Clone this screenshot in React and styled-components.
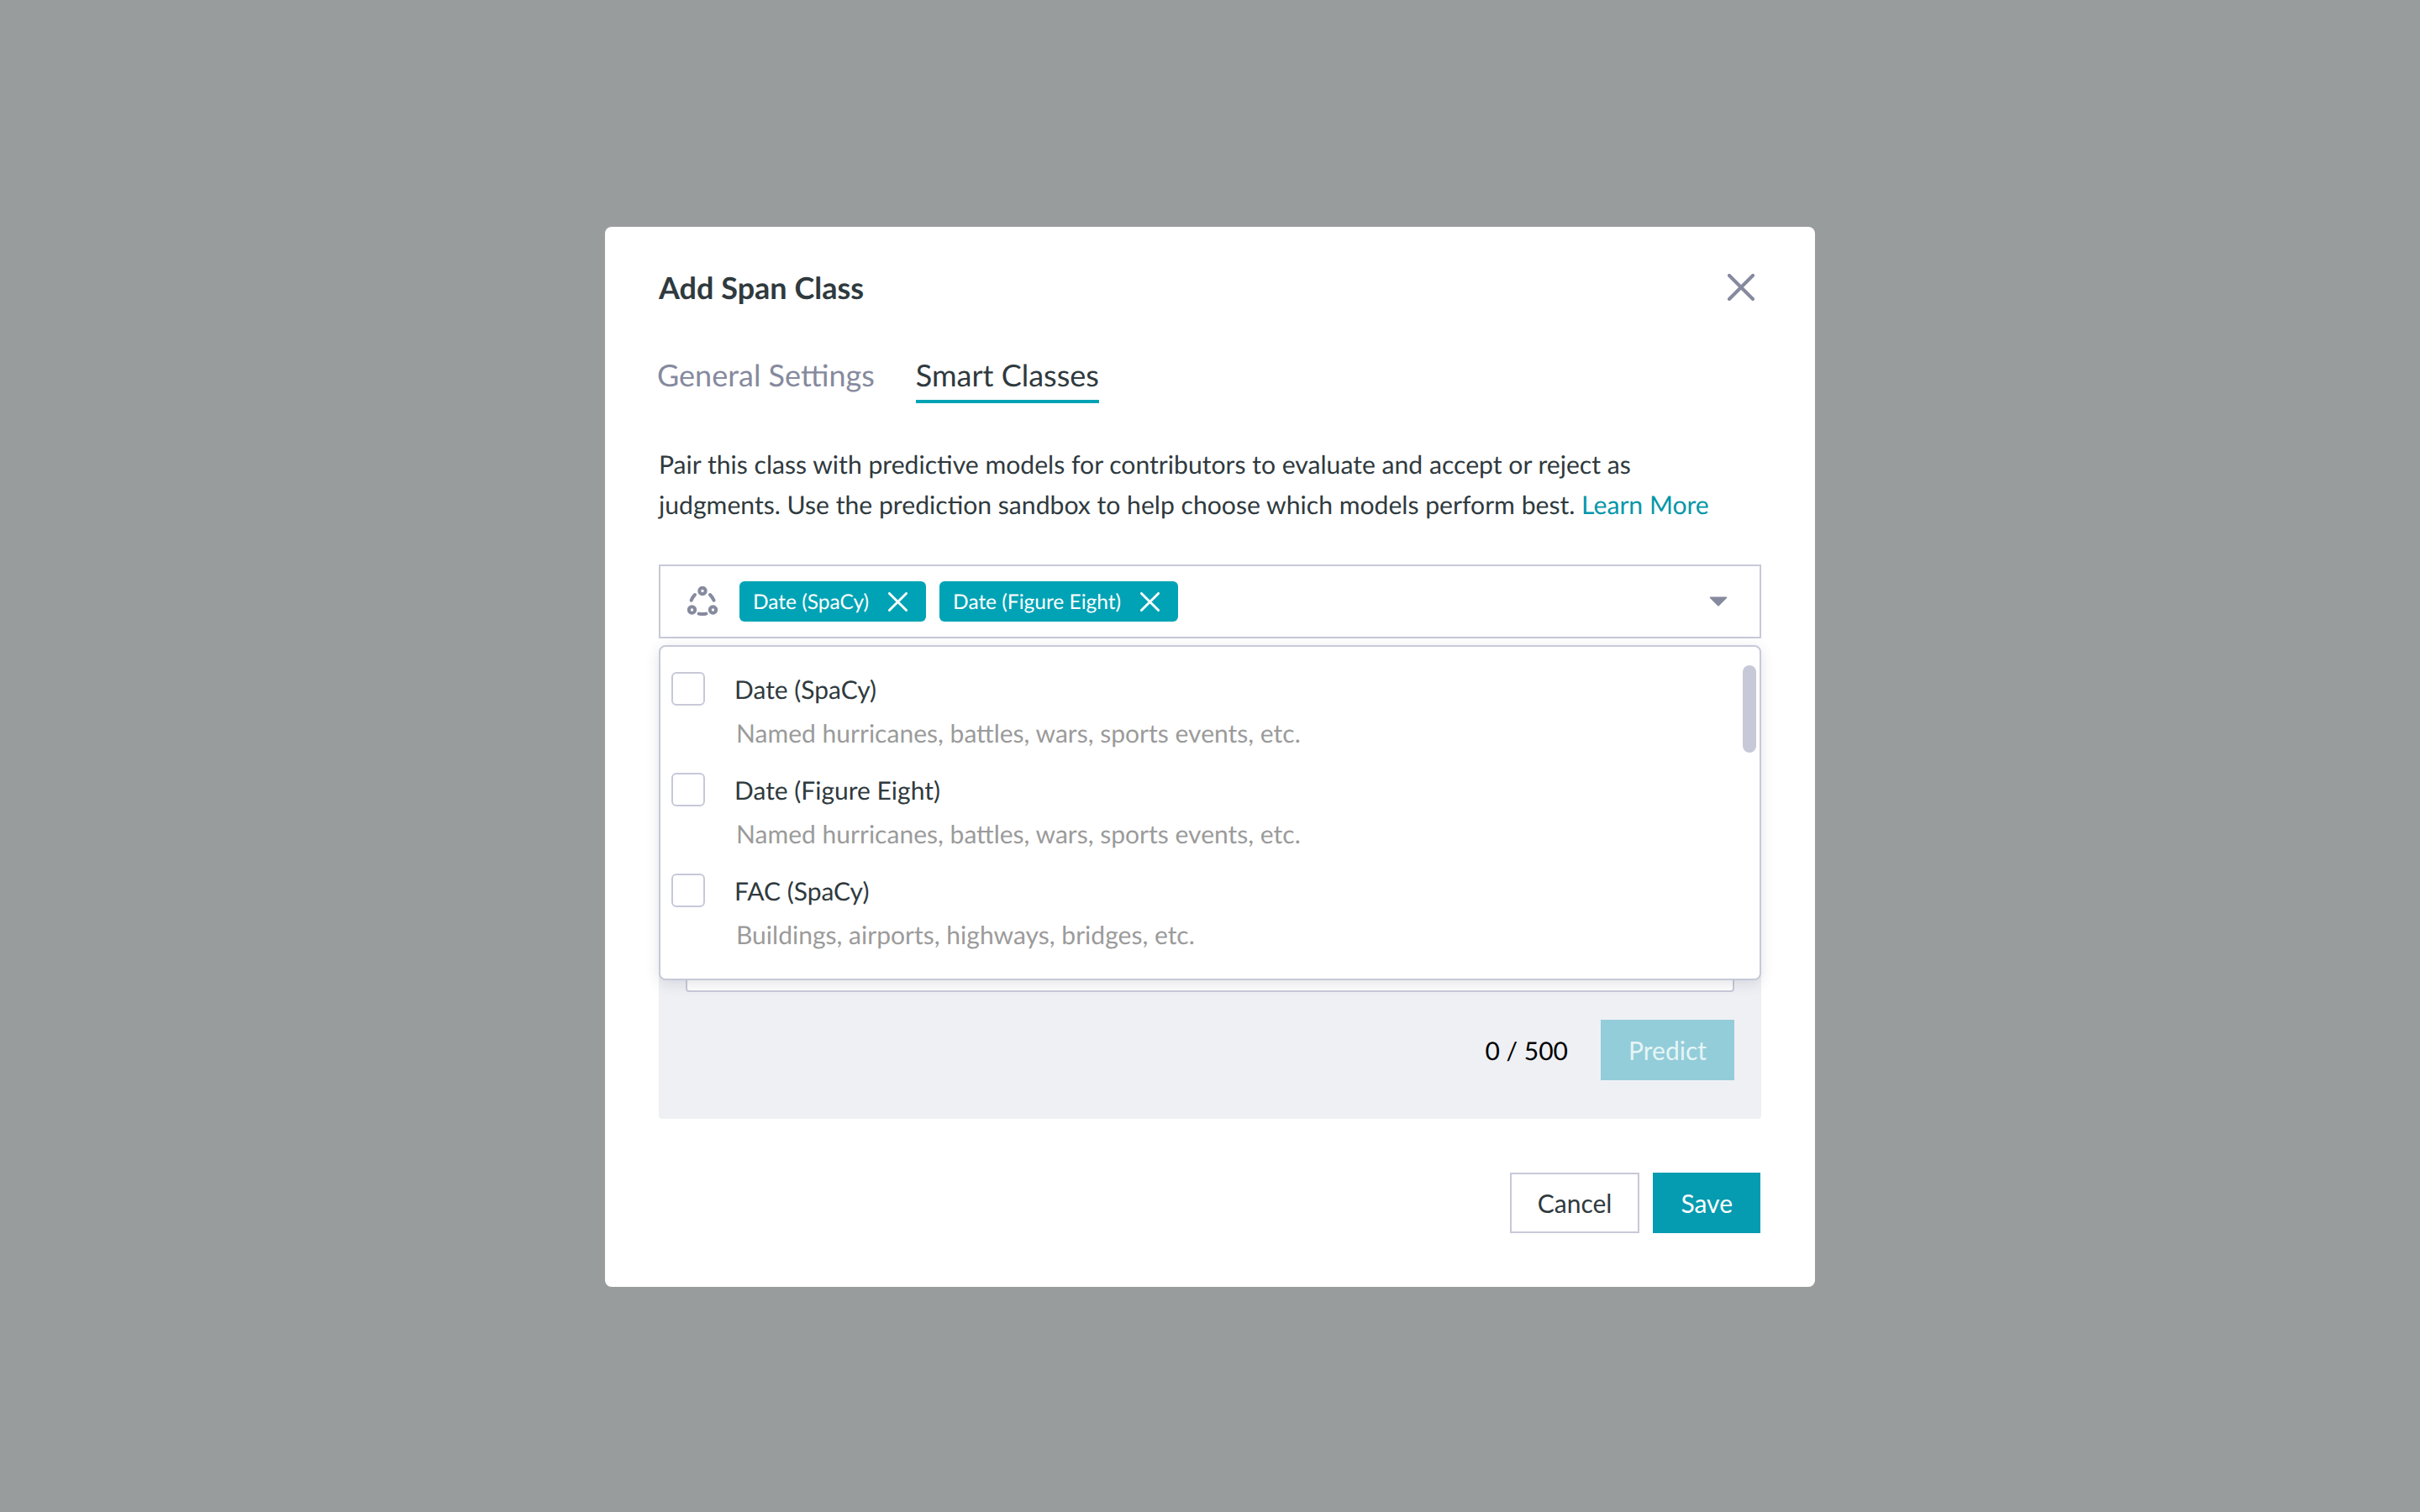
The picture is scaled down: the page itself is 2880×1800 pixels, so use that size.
import React from "react";
import styled, { createGlobalStyle } from "styled-components";

const GlobalStyle = createGlobalStyle`
  html, body {
    margin: 0;
    padding: 0;
    height: 100%;
    font-family: Lato, "Open Sans", sans-serif;
    -webkit-font-smoothing: antialiased;
    text-rendering: geometricPrecision;
  }
  #root {
    height: 100%;
  }
`;

const colors = {
  ink: "#2f3a3e",
  slate: "#868a9e",
  line: "#c7c9d8",
  teal: "#00a3b5",
  tealDark: "#059bb0",
  link: "#0496a9",
  hint: "#9b9b9b"
};

const models = [
  { name: "Date (SpaCy)", hint: "Named hurricanes, battles, wars, sports events, etc." },
  { name: "Date (Figure Eight)", hint: "Named hurricanes, battles, wars, sports events, etc." },
  { name: "FAC (SpaCy)", hint: "Buildings, airports, highways, bridges, etc." }
];

const CrossIcon = ({ size, weight = 3, color = "currentColor" }) => (
  <svg width={size} height={size} viewBox="0 0 24 24" fill="none">
    <path
      d="M1.5 1.5 L22.5 22.5 M22.5 1.5 L1.5 22.5"
      stroke={color}
      strokeWidth={weight}
      strokeLinecap="round"
    />
  </svg>
);

const ModelsIcon = () => (
  <svg width="36" height="36" viewBox="0 0 36 36" fill="none" stroke={colors.slate}>
    <circle cx="18" cy="5.5" r="3.7" strokeWidth="4" />
    <circle cx="5.5" cy="28" r="3.7" strokeWidth="4" />
    <circle cx="30.5" cy="28" r="3.7" strokeWidth="4" />
    <path
      d="M4.6 16.7 Q6 13 9 10 M27 10 Q30 13 31.6 16.7 M13.6 32.6 Q18 33.6 22.4 32.6"
      strokeWidth="4"
      strokeLinecap="round"
    />
  </svg>
);

const CaretIcon = () => (
  <svg width="22" height="12" viewBox="0 0 22 12">
    <path d="M1.5 0.5 H20.5 Q22 0.5 21 2 L12 11 Q11 12 10 11 L1 2 Q0 0.5 1.5 0.5 Z" fill={colors.slate} />
  </svg>
);

const Backdrop = styled.div`
  min-height: 100vh;
  background: #999c9c;
  display: flex;
  align-items: flex-start;
  justify-content: center;
  padding-top: 270px;
  box-sizing: border-box;
`;

const Modal = styled.div`
  width: 1440px;
  height: 1262px;
  box-sizing: border-box;
  background: #fff;
  border-radius: 8px;
  padding: 48px 64px 0;
  color: ${colors.ink};
`;

const Header = styled.div`
  display: flex;
  align-items: center;
  justify-content: space-between;
  height: 48px;
`;

const Title = styled.h2`
  margin: 0;
  font-size: 36px;
  line-height: 48px;
  font-weight: 700;
`;

const CloseButton = styled.button`
  border: 0;
  padding: 0;
  background: none;
  display: flex;
  margin-right: 8px;
`;

const Tabs = styled.div`
  display: flex;
  gap: 49px;
  margin-top: 56px;
  margin-left: -2px;
`;

const Tab = styled.div`
  font-size: 36px;
  line-height: 48px;
  padding-bottom: 6px;
  color: ${p => (p.$active ? colors.ink : colors.slate)};
  border-bottom: 4px solid ${p => (p.$active ? colors.teal : "transparent")};
`;

const Intro = styled.p`
  margin: 49px 0 0;
  font-size: 30.15px;
  line-height: 48px;
`;

const LearnMore = styled.a`
  color: ${colors.link};
`;

const Picker = styled.div`
  position: relative;
  margin-top: 47px;
`;

const SelectBox = styled.div`
  height: 88px;
  box-sizing: border-box;
  border: 2px solid ${colors.line};
  display: flex;
  align-items: center;
  padding: 0 38px 0 32px;
`;

const Chips = styled.div`
  display: flex;
  flex: 1;
  gap: 16px;
  margin-left: 26px;
`;

const Chip = styled.div`
  height: 48px;
  display: flex;
  align-items: center;
  gap: 23px;
  padding: 0 22px 0 16px;
  box-sizing: border-box;
  background: ${colors.teal};
  color: #fff;
  font-size: 24.5px;
  border-radius: 6px;
`;

const Dropdown = styled.div`
  position: absolute;
  z-index: 2;
  top: 96px;
  left: 0;
  right: 0;
  height: 399px;
  box-sizing: border-box;
  background: #fff;
  border: 2px solid ${colors.line};
  border-radius: 8px;
  box-shadow: 0 4px 16px rgba(80, 84, 110, 0.16);
  padding-top: 30px;
`;

const ScrollThumb = styled.div`
  position: absolute;
  top: 22px;
  right: 4px;
  width: 16px;
  height: 104px;
  border-radius: 8px;
  background: ${colors.line};
`;

const Option = styled.div`
  display: grid;
  grid-template-columns: 40px 1fr;
  align-content: start;
  column-gap: 35px;
  padding-left: 13px;
  height: 120px;
`;

const Checkbox = styled.div`
  width: 40px;
  height: 40px;
  box-sizing: border-box;
  border: 2px solid ${colors.line};
  border-radius: 6px;
`;

const OptionName = styled.div`
  padding-top: 1px;
  font-size: 30px;
  line-height: 40px;
`;

const OptionHint = styled.div`
  grid-column: 2;
  margin: 12px 0 0 2px;
  font-size: 30.05px;
  line-height: 40px;
  color: ${colors.hint};
`;

const Sandbox = styled.div`
  margin-top: 32px;
  height: 540px;
  box-sizing: border-box;
  background: #eff0f4;
  border-radius: 4px;
  padding: 32px 32px 46px;
  display: flex;
  flex-direction: column;
`;

const SandboxInput = styled.div`
  flex: 1;
  background: #fff;
  border: 2px solid ${colors.line};
  border-radius: 4px;
`;

const SandboxFooter = styled.div`
  display: flex;
  align-items: center;
  justify-content: flex-end;
  gap: 39px;
  margin-top: 33px;
`;

const Counter = styled.span`
  padding-top: 1px;
  font-size: 30px;
  color: #000;
`;

const Button = styled.button`
  height: 72px;
  box-sizing: border-box;
  padding: 0 31px;
  font-family: inherit;
  font-size: 30px;
  border-radius: 0;
  border: 2px solid ${p => (p.$outline ? colors.line : "transparent")};
  background: ${p => (p.$outline ? "#fff" : p.$muted ? "#93cdd9" : colors.tealDark)};
  color: ${p => (p.$outline ? colors.ink : p.$muted ? "#e6f5f7" : "#fff")};
`;

const Actions = styled.div`
  display: flex;
  justify-content: flex-end;
  gap: 16px;
  margin-top: 64px;
  padding-right: 1px;
`;

const App = () => (
  <>
    <GlobalStyle />
    <Backdrop>
      <Modal>
        <Header>
          <Title>Add Span Class</Title>
          <CloseButton>
            <CrossIcon size={32} weight={3.1} color={colors.slate} />
          </CloseButton>
        </Header>
        <Tabs>
          <Tab>General Settings</Tab>
          <Tab $active>Smart Classes</Tab>
        </Tabs>
        <Intro>
          Pair this class with predictive models for contributors to evaluate and accept or reject as
          <br />
          judgments. Use the prediction sandbox to help choose which models perform best.{" "}
          <LearnMore>Learn More</LearnMore>
        </Intro>
        <Picker>
          <SelectBox>
            <ModelsIcon />
            <Chips>
              <Chip>
                Date (SpaCy)
                <CrossIcon size={23} weight={3} />
              </Chip>
              <Chip>
                Date (Figure Eight)
                <CrossIcon size={23} weight={3} />
              </Chip>
            </Chips>
            <CaretIcon />
          </SelectBox>
          <Dropdown>
            <ScrollThumb />
            {models.map(model => (
              <Option key={model.name}>
                <Checkbox />
                <OptionName>{model.name}</OptionName>
                <OptionHint>{model.hint}</OptionHint>
              </Option>
            ))}
          </Dropdown>
          <Sandbox>
            <SandboxInput />
            <SandboxFooter>
              <Counter>0 / 500</Counter>
              <Button $muted>Predict</Button>
            </SandboxFooter>
          </Sandbox>
        </Picker>
        <Actions>
          <Button $outline>Cancel</Button>
          <Button>Save</Button>
        </Actions>
      </Modal>
    </Backdrop>
  </>
);

export default App;
